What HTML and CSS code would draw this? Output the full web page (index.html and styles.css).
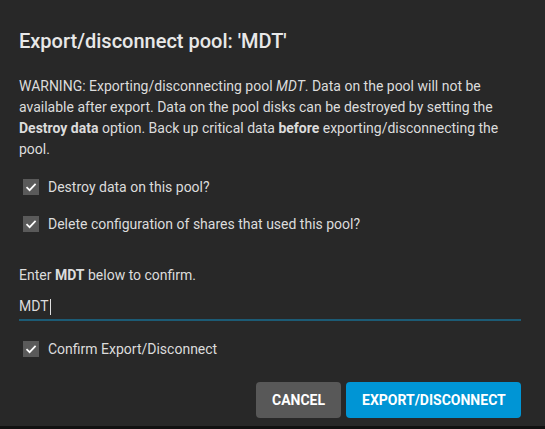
FILE: index.html
```html
<!DOCTYPE html>
<html>
<head>
<meta charset="utf-8">
<link rel="stylesheet" href="styles.css">
</head>
<body>
<div class="dialog">
  <h1 class="title">Export/disconnect pool: 'MDT'</h1>
  <p class="warning">WARNING: Exporting/disconnecting pool <em>MDT</em>. Data on the pool will not be available after export. Data on the pool disks can be destroyed by setting the <b>Destroy data</b> option. Back up critical data <b>before</b> exporting/disconnecting the pool.</p>
  <div class="checks">
    <div class="check-row">
      <span class="box"><svg viewBox="0 0 16 16" width="16" height="16"><path d="M3.5 8.2 L6.6 11.2 L12.6 4.8" fill="none" stroke="#fff" stroke-width="1.7"/></svg></span>
      <span class="label">Destroy data on this pool?</span>
    </div>
    <div class="check-row">
      <span class="box"><svg viewBox="0 0 16 16" width="16" height="16"><path d="M3.5 8.2 L6.6 11.2 L12.6 4.8" fill="none" stroke="#fff" stroke-width="1.7"/></svg></span>
      <span class="label">Delete configuration of shares that used this pool?</span>
    </div>
  </div>
  <div class="enter">Enter <b>MDT</b> below to confirm.</div>
  <div class="field"><span class="value">MDT</span><span class="caret"></span></div>
  <div class="check-row confirm">
    <span class="box"><svg viewBox="0 0 16 16" width="16" height="16"><path d="M3.5 8.2 L6.6 11.2 L12.6 4.8" fill="none" stroke="#fff" stroke-width="1.7"/></svg></span>
    <span class="label">Confirm Export/Disconnect</span>
  </div>
  <div class="actions">
    <button class="btn btn-cancel">CANCEL</button>
    <button class="btn btn-primary">EXPORT/DISCONNECT</button>
  </div>
</div>
</body>
</html>
```

FILE: styles.css
```css
html, body {
  margin: 0;
  padding: 0;
  background: #111111;
}
body {
  font-family: Roboto, "Liberation Sans", sans-serif;
  color: #dcdcdc;
}
.dialog {
  box-sizing: border-box;
  height: 426px;
  background: #282828;
  padding: 25px 24px 0 19px;
}
.title {
  margin: 0;
  font-size: 20px;
  line-height: 32px;
  font-weight: 500;
  color: #e8e8e8;
}
.warning {
  margin: 19px 0 0 0;
  font-size: 14px;
  line-height: 21px;
}
.warning b { font-weight: 700; }
.checks {
  margin-top: 8px;
}
.check-row {
  display: flex;
  align-items: center;
  height: 37px;
  font-size: 14px;
}
.box {
  width: 16px;
  height: 16px;
  margin-left: 4px;
  margin-right: 9px;
  background: #5a5a5a;
  display: flex;
}
.enter {
  margin-top: 23px;
  font-size: 14px;
  line-height: 21px;
}
.enter b { font-weight: 700; }
.field {
  margin-top: 10px;
  font-size: 14px;
  line-height: 21px;
  padding-bottom: 2px;
  border-bottom: 2px solid #1c5b75;
  display: flex;
  align-items: center;
}
.caret {
  display: inline-block;
  width: 1px;
  height: 16px;
  background: #e0e0e0;
  margin-left: 1px;
}
.confirm {
  margin-top: 9px;
}
.actions {
  margin-top: 15px;
  display: flex;
  justify-content: flex-end;
  gap: 5px;
}
.btn {
  height: 36px;
  border: none;
  border-radius: 4px;
  font-family: Roboto, "Liberation Sans", sans-serif;
  font-size: 14px;
  font-weight: 700;
  color: #ffffff;
  padding: 0 16px;
}
.btn-cancel {
  background: #585858;
  width: 85px;
}
.btn-primary {
  background: #0095d5;
  width: 175px;
}
```
